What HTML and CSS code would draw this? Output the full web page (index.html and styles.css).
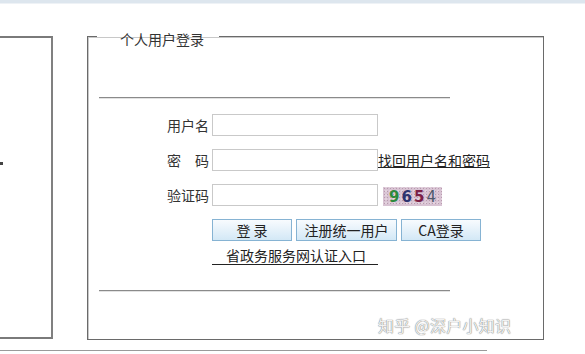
FILE: index.html
```html
<!DOCTYPE html>
<html lang="zh-CN">
  <head>
    <meta charset="UTF-8" />
    <title>个人用户登录</title>
    <link rel="stylesheet" href="styles.css">
  </head>
  <body>
    <div class="topbar"></div>

    <div class="main">
      <div class="side">
        <span class="mark"></span>
      </div>

      <fieldset class="login">
        <legend>个人用户登录</legend>
        <hr class="rule top" />

        <form class="grid">
          <label for="user">用户名</label>
          <input type="text" id="user" />
          <span></span>

          <label for="pwd" class="spread"><span>密</span><span>码</span></label>
          <input type="password" id="pwd" />
          <a href="#" class="link">找回用户名和密码</a>

          <label for="code">验证码</label>
          <input type="text" id="code" />
          <div class="captcha">
            <span class="d1">9</span><span class="d2">6</span><span class="d3">5</span><span class="d4">4</span>
          </div>

          <div class="actions">
            <div class="btns">
              <button type="button" class="btn">登 录</button>
              <button type="button" class="btn wide">注册统一用户</button>
              <button type="button" class="btn">CA登录</button>
            </div>
            <a href="#" class="portal">省政务服务网认证入口</a>
          </div>
        </form>

        <hr class="rule bottom" />
      </fieldset>
    </div>

    <div class="baseline"></div>

    <div class="watermark">知乎 @深户小知识</div>
  </body>
</html>
```

FILE: styles.css
```css
body {
  margin: 0;
  background: #fff;
  font-family: "Noto Sans CJK SC", "Microsoft YaHei", sans-serif;
  font-size: 14px;
  color: #333;
  position: relative;
  overflow: hidden;
  height: 354px;
}

.topbar {
  height: 3px;
  background: #dde6ee;
  border-bottom: 1px solid #eef2f6;
}

.main {
  display: flex;
  align-items: flex-start;
  padding-top: 19px;
}

.side {
  width: 53px;
  height: 303px;
  margin-top: 13px;
  box-sizing: border-box;
  border: 2px solid #7a7a7a;
  border-left: none;
  border-right-color: #808080;
  padding-top: 124px;
}

.mark {
  display: block;
  width: 3px;
  height: 3px;
  background: #444;
}

.login {
  margin: 0 0 0 34px;
  padding: 0;
  width: 457px;
  height: 317px;
  box-sizing: border-box;
  border: 1px solid #6a6a6a;
  box-shadow: inset 1px 1px 0 #c8c8c8;
  min-inline-size: 0;
}

.login legend {
  margin-left: 9px;
  padding: 6px 15px 0 23px;
  line-height: 20px;
  color: #333;
}

.rule {
  margin: 0;
  border: none;
  height: 1px;
  background: #8a8a8a;
  box-shadow: 0 1px 0 #e2e2e2;
  width: 351px;
  margin-left: 11px;
}

.rule.top {
  margin-top: 48px;
}

.rule.bottom {
  margin-top: 25px;
}

.grid {
  display: grid;
  grid-template-columns: 42px 166px auto;
  column-gap: 3px;
  row-gap: 13px;
  align-items: center;
  margin: 16px 0 0 79px;
}

.grid label {
  text-align: right;
  line-height: 22px;
  color: #333;
}

.grid .spread {
  display: flex;
  justify-content: space-between;
}

.grid input {
  box-sizing: border-box;
  width: 166px;
  height: 22px;
  margin: 0;
  border: 1px solid #c9c9c9;
  background: #fff;
  padding: 0 3px;
}

.link {
  color: #222;
  margin-left: -3px;
  text-decoration: underline;
}

.captcha {
  width: 59px;
  height: 19px;
  margin: 3px 0 0 2px;
  display: flex;
  align-items: center;
  justify-content: center;
  gap: 2px;
  font-family: "DejaVu Sans", sans-serif;
  font-size: 15px;
  font-weight: bold;
  background-color: #d8c3d3;
  background-image:
    radial-gradient(#b89aae 0.6px, transparent 0.8px),
    radial-gradient(#efe2ea 0.6px, transparent 0.8px);
  background-size: 3px 3px, 4px 4px;
  background-position: 0 0, 1px 2px;
}

.d1 { color: #2c8a3c; }
.d2 { color: #2e3470; }
.d3 { color: #7c1f47; }
.d4 { color: #4f5a6c; font-weight: normal; }

.actions {
  grid-column: 2 / span 2;
  display: flex;
  flex-direction: column;
  align-items: flex-start;
  gap: 5px;
}

.btns {
  display: flex;
  gap: 4px;
}

.btn {
  width: 80px;
  height: 22px;
  padding: 0;
  font-family: inherit;
  font-size: 14px;
  line-height: 20px;
  color: #222;
  border: 1px solid #86b3d3;
  background: linear-gradient(#f8fbfe, #d3e8f6);
}

.btn.wide {
  width: 101px;
}

.portal {
  box-sizing: border-box;
  width: 166px;
  padding-left: 14px;
  line-height: 18px;
  color: #222;
  text-decoration: none;
  border-bottom: 1px solid #222;
}

.baseline {
  margin-top: 10px;
  width: 487px;
  height: 1px;
  background: #9a9a9a;
}

.watermark {
  position: absolute;
  left: 378px;
  top: 313px;
  font-size: 16px;
  letter-spacing: 0.3px;
  color: #f2f2f2;
  text-shadow: 0 0 1px #777, 0 0 1px #999;
}
```
